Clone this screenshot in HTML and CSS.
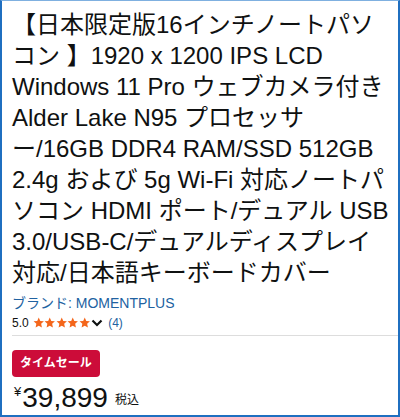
FILE: index.html
```html
<!DOCTYPE html>
<html lang="ja">
<head>
    <meta charset="UTF-8">
    <meta name="viewport" content="width=device-width, initial-scale=1.0">
    <title>商品詳細</title>
    <link rel="stylesheet" href="styles.css">
</head>
<body>
    <div class="product-panel">
        <h1 class="product-title">【日本限定版16インチノートパソコン 】1920 x 1200 IPS LCD Windows 11 Pro ウェブカメラ付き Alder Lake N95 プロセッサー/16GB DDR4 RAM/SSD 512GB 2.4g および 5g Wi-Fi 対応ノートパソコン HDMI ポート/デュアル USB 3.0/USB-C/デュアルディスプレイ対応/日本語キーボードカバー</h1>

        <a class="brand-link" href="#">ブランド: MOMENTPLUS</a>

        <div class="rating-row">
            <span class="rating-value">5.0</span>
            <span class="stars">
                <svg viewBox="0 0 12 12"><path d="M6 0.6l1.6 3.5 3.8 0.4-2.9 2.6 0.8 3.8L6 9l-3.3 1.9 0.8-3.8L0.6 4.5l3.8-0.4z"/></svg>
                <svg viewBox="0 0 12 12"><path d="M6 0.6l1.6 3.5 3.8 0.4-2.9 2.6 0.8 3.8L6 9l-3.3 1.9 0.8-3.8L0.6 4.5l3.8-0.4z"/></svg>
                <svg viewBox="0 0 12 12"><path d="M6 0.6l1.6 3.5 3.8 0.4-2.9 2.6 0.8 3.8L6 9l-3.3 1.9 0.8-3.8L0.6 4.5l3.8-0.4z"/></svg>
                <svg viewBox="0 0 12 12"><path d="M6 0.6l1.6 3.5 3.8 0.4-2.9 2.6 0.8 3.8L6 9l-3.3 1.9 0.8-3.8L0.6 4.5l3.8-0.4z"/></svg>
                <svg viewBox="0 0 12 12"><path d="M6 0.6l1.6 3.5 3.8 0.4-2.9 2.6 0.8 3.8L6 9l-3.3 1.9 0.8-3.8L0.6 4.5l3.8-0.4z"/></svg>
            </span>
            <svg class="chevron" viewBox="0 0 12 10"><path d="M1.5 2.5l4.5 4.5 4.5-4.5"/></svg>
            <a class="review-count" href="#">(4)</a>
        </div>

        <div class="deal-section">
            <span class="deal-badge">タイムセール</span>
            <div class="price-row">
                <span class="price-symbol">¥</span>
                <span class="price-whole">39,899</span>
                <span class="price-tax">税込</span>
            </div>
        </div>
    </div>
</body>
</html>
```

FILE: styles.css
```css
* {
    box-sizing: border-box;
}

body {
    margin: 0;
    font-family: 'Liberation Sans', Arial, 'Noto Sans CJK JP', sans-serif;
    color: #0f1111;
    background-color: #ffffff;
}

.product-panel {
    height: 417px;
    border: 2px solid #1f6fc0;
    border-top: 1px solid #7fb0e0;
    padding: 8px 8px 0 10px;
    overflow: hidden;
}

.product-title {
    margin: 0;
    font-size: 24px;
    font-weight: normal;
    line-height: 31px;
}

.brand-link {
    display: block;
    margin-top: 5px;
    font-size: 14px;
    line-height: 20px;
    color: #2162a1;
    text-decoration: none;
}

.rating-row {
    display: flex;
    align-items: center;
    height: 23px;
    padding-bottom: 2px;
    font-size: 12px;
    border-bottom: 1px solid #dddddd;
    margin-right: -8px;
}

.rating-value {
    margin-right: 4px;
}

.stars {
    display: flex;
}

.stars svg {
    width: 11.5px;
    height: 11.5px;
    fill: #f4661b;
}

.chevron {
    width: 12px;
    height: 10px;
    margin-left: 1px;
    fill: none;
    stroke: #0f1111;
    stroke-width: 2.2;
}

.review-count {
    margin-left: 5px;
    color: #2162a1;
    text-decoration: none;
}

.deal-section {
    padding-top: 14px;
}

.deal-badge {
    display: inline-block;
    background-color: #cc0c39;
    color: #ffffff;
    font-size: 12px;
    font-weight: bold;
    line-height: 27px;
    padding: 0 8px;
    border-radius: 4px;
}

.price-row {
    display: flex;
    align-items: flex-start;
    margin-top: 5px;
    line-height: 1;
}

.price-symbol {
    font-size: 13px;
    margin: 3px 1px 0 2px;
}

.price-whole {
    font-size: 28px;
    line-height: 32px;
}

.price-tax {
    font-size: 12px;
    margin: 12px 0 0 7px;
}
```
